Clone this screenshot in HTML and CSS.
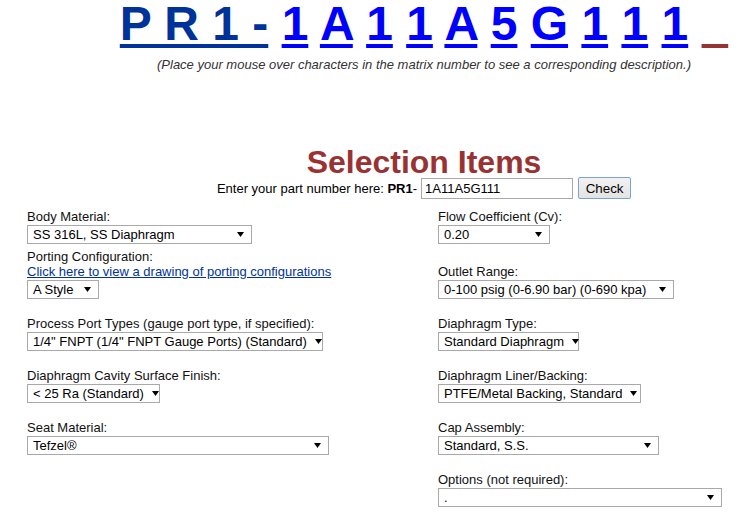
FILE: index.html
```html
<!DOCTYPE html>
<html>
<head>
<meta charset="utf-8">
<link rel="stylesheet" href="styles.css">
</head>
<body>
<div class="top">
  <div class="matrix"><span class="prefix">P R 1 -</span> <a class="ch" href="#">1</a> <a class="ch" href="#">A</a> <a class="ch" href="#">1</a> <a class="ch" href="#">1</a> <a class="ch" href="#">A</a> <a class="ch" href="#">5</a> <a class="ch" href="#">G</a> <a class="ch" href="#">1</a> <a class="ch" href="#">1</a> <a class="ch" href="#">1</a> <a class="ch blank" href="#">&nbsp;&nbsp;</a></div>
  <div class="hint">(Place your mouse over characters in the matrix number to see a corresponding description.)</div>
  <h1 class="title">Selection Items</h1>
  <div class="entry">
    <span class="entry-label">Enter your part number here: <b>PR1</b>-</span>
    <input class="part" type="text" value="1A11A5G111">
    <button class="check" type="button">Check</button>
  </div>
</div>

<div class="fields">
  <div class="col col-left">
    <div class="field field-tight">
      <div class="label">Body Material:</div>
      <div class="sel w-body"><span>SS 316L, SS Diaphragm</span><svg class="arr" width="7" height="5" viewBox="0 0 7 5"><polygon points="0,0 7,0 3.5,5"/></svg></div>
    </div>
    <div class="field">
      <div class="label">Porting Configuration:</div>
      <a class="label link" href="#">Click here to view a drawing of porting configurations</a>
      <div class="sel w-style"><span>A Style</span><svg class="arr" width="7" height="5" viewBox="0 0 7 5"><polygon points="0,0 7,0 3.5,5"/></svg></div>
    </div>
    <div class="field">
      <div class="label">Process Port Types (gauge port type, if specified):</div>
      <div class="sel w-process"><span>1/4" FNPT (1/4" FNPT Gauge Ports) (Standard)</span><svg class="arr" width="7" height="5" viewBox="0 0 7 5"><polygon points="0,0 7,0 3.5,5"/></svg></div>
    </div>
    <div class="field">
      <div class="label">Diaphragm Cavity Surface Finish:</div>
      <div class="sel w-cavity"><span>&lt; 25 Ra (Standard)</span><svg class="arr" width="7" height="5" viewBox="0 0 7 5"><polygon points="0,0 7,0 3.5,5"/></svg></div>
    </div>
    <div class="field">
      <div class="label">Seat Material:</div>
      <div class="sel w-seat"><span>Tefzel®</span><svg class="arr" width="7" height="5" viewBox="0 0 7 5"><polygon points="0,0 7,0 3.5,5"/></svg></div>
    </div>
  </div>
  <div class="col col-right">
    <div class="field field-wide">
      <div class="label">Flow Coefficient (Cv):</div>
      <div class="sel w-flow"><span>0.20</span><svg class="arr" width="7" height="5" viewBox="0 0 7 5"><polygon points="0,0 7,0 3.5,5"/></svg></div>
    </div>
    <div class="field">
      <div class="label">Outlet Range:</div>
      <div class="sel w-outlet"><span>0-100 psig (0-6.90 bar) (0-690 kpa)</span><svg class="arr" width="7" height="5" viewBox="0 0 7 5"><polygon points="0,0 7,0 3.5,5"/></svg></div>
    </div>
    <div class="field">
      <div class="label">Diaphragm Type:</div>
      <div class="sel w-dtype"><span>Standard Diaphragm</span><svg class="arr" width="7" height="5" viewBox="0 0 7 5"><polygon points="0,0 7,0 3.5,5"/></svg></div>
    </div>
    <div class="field">
      <div class="label">Diaphragm Liner/Backing:</div>
      <div class="sel w-liner"><span>PTFE/Metal Backing, Standard</span><svg class="arr" width="7" height="5" viewBox="0 0 7 5"><polygon points="0,0 7,0 3.5,5"/></svg></div>
    </div>
    <div class="field">
      <div class="label">Cap Assembly:</div>
      <div class="sel w-cap"><span>Standard, S.S.</span><svg class="arr" width="7" height="5" viewBox="0 0 7 5"><polygon points="0,0 7,0 3.5,5"/></svg></div>
    </div>
    <div class="field">
      <div class="label">Options (not required):</div>
      <div class="sel w-options"><span>.</span><svg class="arr" width="7" height="5" viewBox="0 0 7 5"><polygon points="0,0 7,0 3.5,5"/></svg></div>
    </div>
  </div>
</div>
</body>
</html>
```

FILE: styles.css
```css
html, body {
  margin: 0;
  padding: 0;
  background: #ffffff;
}
body {
  font-family: "Liberation Sans", Arial, sans-serif;
  font-size: 13px;
  color: #000000;
  width: 740px;
  overflow: hidden;
}
.top {
  padding-left: 108px;
  text-align: center;
}
.matrix {
  font-size: 48px;
  font-weight: bold;
  line-height: 48px;
  white-space: nowrap;
}
.prefix {
  color: #003399;
  text-decoration: underline;
  text-decoration-thickness: 4px;
  text-underline-offset: 4px;
}
.ch {
  color: #0000ff;
  text-decoration: underline;
  text-decoration-thickness: 4px;
  text-underline-offset: 4px;
}
.blank {
  color: #993333;
}
.hint {
  margin-top: 9px;
  font-size: 13px;
  line-height: 15px;
  font-style: italic;
  color: #333333;
}
.title {
  margin: 75px 0 0 0;
  font-size: 32px;
  line-height: 30px;
  font-weight: bold;
  color: #993333;
}
.entry {
  display: flex;
  justify-content: center;
  align-items: center;
  height: 22px;
  white-space: nowrap;
}
.entry-label {
  margin-right: 4px;
}
.part {
  box-sizing: border-box;
  width: 152px;
  height: 21px;
  margin: 0;
  padding: 1px 3px;
  border: 1px solid #a9a9a9;
  font-family: "Liberation Sans", Arial, sans-serif;
  font-size: 13px;
  color: #000000;
}
.check {
  box-sizing: border-box;
  width: 53px;
  height: 22px;
  margin: 0 0 0 5px;
  padding: 0;
  border: 1px solid #7da2ce;
  border-radius: 2px;
  background: linear-gradient(#f2f2f2, #e3e3e3);
  font-family: "Liberation Sans", Arial, sans-serif;
  font-size: 13.33px;
  color: #000000;
}
.fields {
  display: flex;
  padding-left: 27px;
  margin-top: 10px;
}
.col-left {
  width: 411px;
}
.col {
  display: flex;
  flex-direction: column;
  align-items: flex-start;
}
.field {
  display: flex;
  flex-direction: column;
  align-items: flex-start;
  margin-bottom: 17px;
}
.field-tight {
  margin-bottom: 5px;
}
.field-wide {
  margin-bottom: 20px;
}
.label {
  line-height: 15px;
  font-size: 13px;
  color: #111111;
  white-space: nowrap;
}
.link {
  color: #003399;
  text-decoration: underline;
}
.sel {
  box-sizing: border-box;
  height: 19px;
  margin-top: 1px;
  border: 1px solid #a9a9a9;
  display: flex;
  align-items: center;
  justify-content: space-between;
  padding: 0 7px 0 5px;
  font-size: 13px;
  white-space: nowrap;
  background: #ffffff;
}
.arr {
  flex: none;
  margin-left: 8px;
}
.arr polygon {
  fill: #000000;
}
.w-body { width: 225px; }
.w-style { width: 72px; }
.w-process { width: 296px; }
.w-cavity { width: 133px; }
.w-seat { width: 302px; }
.w-flow { width: 112px; }
.w-outlet { width: 236px; }
.w-dtype { width: 141px; }
.w-liner { width: 203px; }
.w-cap { width: 221px; }
.w-options { width: 284px; }
```
